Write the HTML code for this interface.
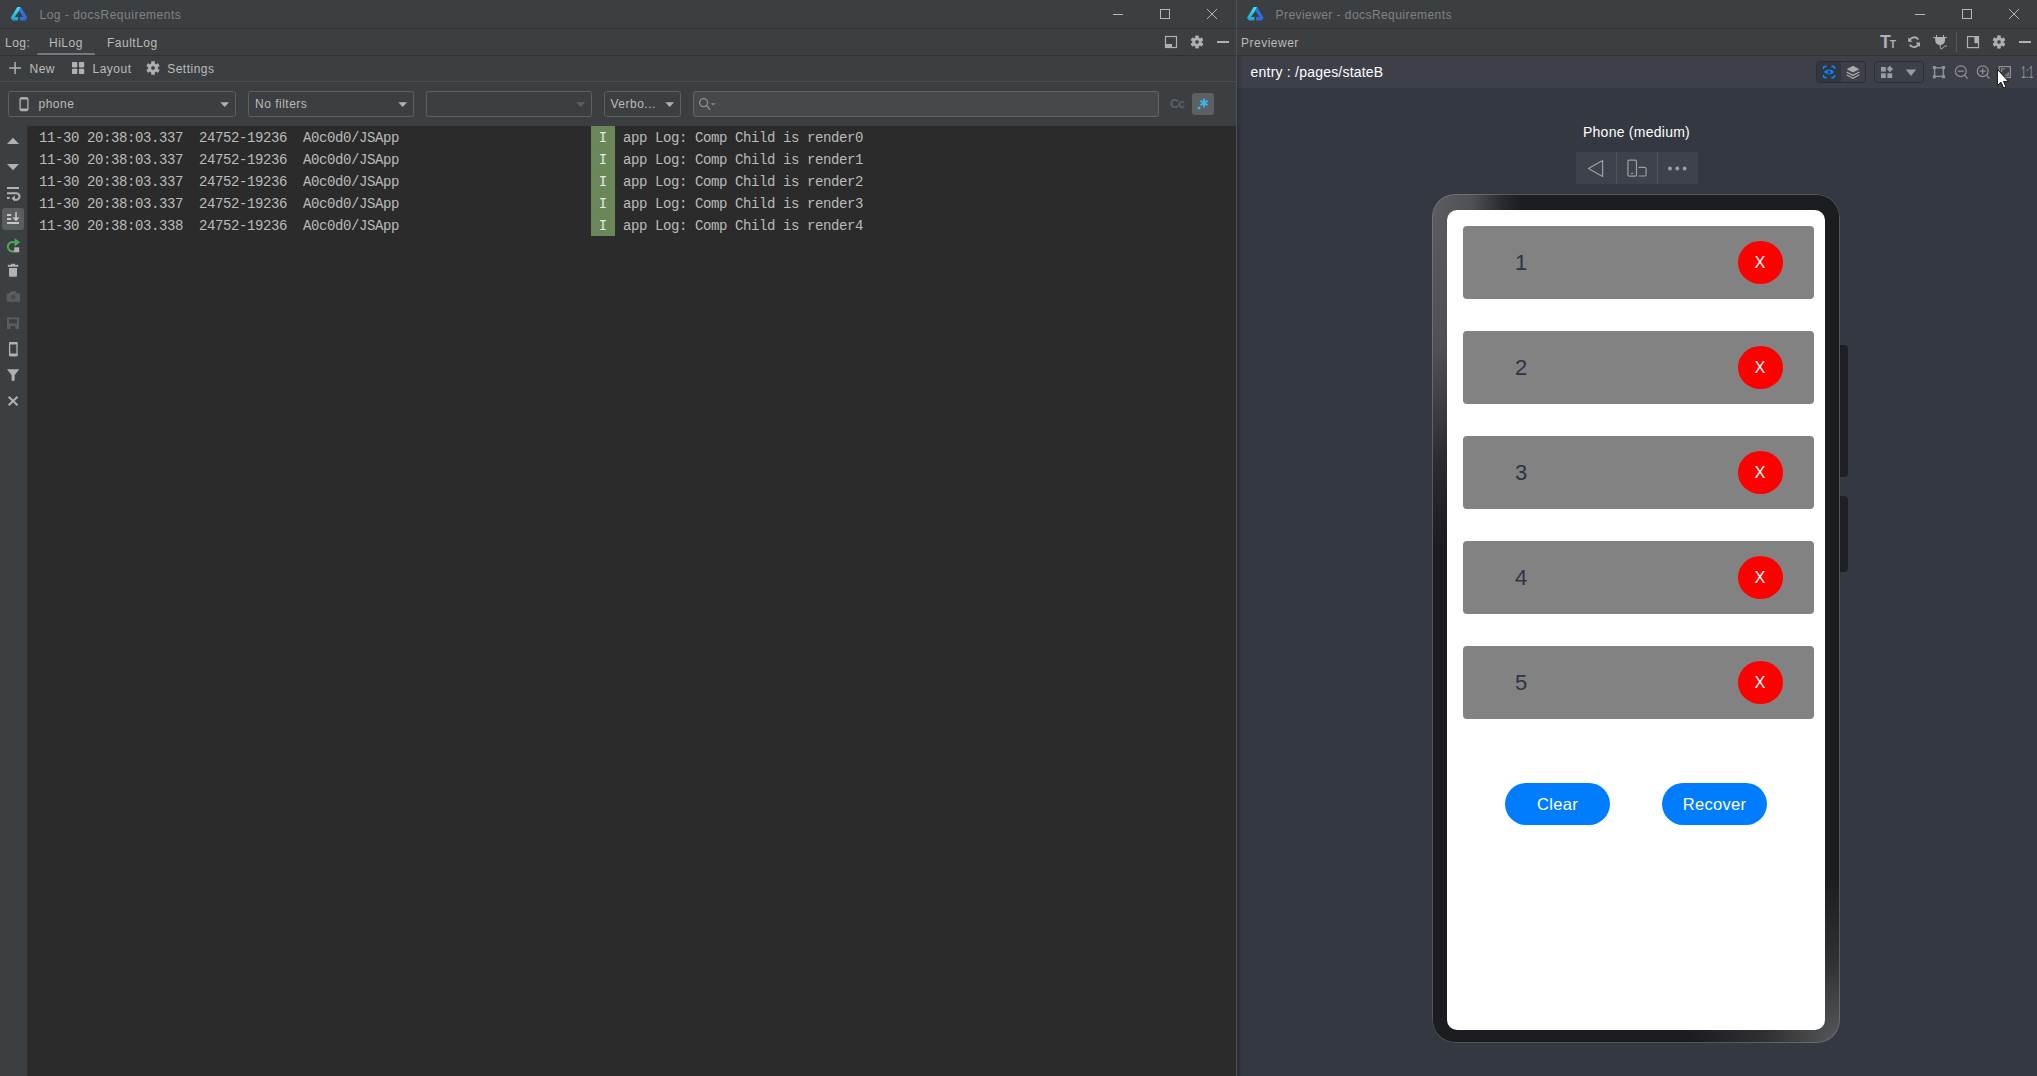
<!DOCTYPE html>
<html><head><meta charset="utf-8"><title>Log - docsRequirements</title>
<style>
*{box-sizing:border-box;margin:0;padding:0}
html,body{width:2037px;height:1076px;overflow:hidden;background:#3c3f41}
body{position:relative;font-family:"Liberation Sans",sans-serif;font-size:13px;color:#bbbbbb}
.abs{position:absolute}
.t{position:absolute;white-space:nowrap;line-height:1}
#lw{left:0;top:0;width:1237px;height:1076px;background:#3c3f41}
.hl{position:absolute;left:0;height:1px;background:#323232}
#logarea{left:28px;top:126px;width:1208px;height:950px;background:#2b2b2b}
.row{position:absolute;left:0;height:22px;width:1208px;font-family:"Liberation Mono",monospace;font-size:14px;letter-spacing:-0.4px;color:#bbbbbb;line-height:22px;white-space:pre}
.row span{position:absolute;top:0.5px}
.row .lvl{top:0;left:563px;width:24px;height:22px;background:#6a8759;color:#e8e8e8;text-align:center;line-height:25px;letter-spacing:0}
.combo{position:absolute;top:91px;height:26px;border:1px solid #5e6060;border-radius:3px;background:#3c3f41}
#rw{left:1237px;top:0;width:800px;height:1076px;background:#3c3f41}
#pv{left:0;top:56px;width:800px;height:1020px;background:#343840}
#pvbar{left:0;top:56px;width:800px;height:32px;background:#3d4048}
.item{position:absolute;left:1463px;width:351px;height:73px;background:#828282;border-radius:4px}
.num{position:absolute;left:52px;top:25.5px;font-size:22px;color:#2c3445;line-height:1}
.xb{position:absolute;left:274.5px;top:15.2px;width:45px;height:42.4px;border-radius:50%;background:#fe0000;color:#fff;font-size:16.3px;text-align:center;line-height:43px}
.btn{position:absolute;top:783px;width:105px;height:42px;border-radius:21px;background:#007dff;color:#fff;font-size:16.5px;letter-spacing:0.3px;text-align:center;line-height:42px}
#icons{position:absolute;left:0;top:0;overflow:visible}
#frame{left:1432px;top:194px;width:407.5px;height:848.5px;border-radius:23px;background-color:#1c1d20;
 background-image:radial-gradient(90px 350px at 0 0,#5b5d60 0,#4e5053 45%,rgba(50,52,55,.6) 78%,rgba(28,29,32,0) 100%),radial-gradient(150px 165px at 100% 100%,#56585a 0,rgba(60,61,63,.6) 50%,rgba(28,29,32,0) 100%);
 background-repeat:no-repeat;
 box-shadow:inset 0 0 0 1px rgba(140,142,146,.5)}
.sb{position:absolute;left:1839.5px;width:8px;background:#1e2024;border-radius:0 4px 4px 0}
</style></head><body>
<div id="lw" class="abs">
  <div class="t" style="left:39.5px;top:8.74px;font-size:12px;letter-spacing:0.5px;color:#7f8386;">Log - docsRequirements</div>
  <div class="hl" style="top:28px;width:1237px"></div>
  <div class="t" style="left:5px;top:36.94px;font-size:12px;letter-spacing:0.5px;">Log:</div>
  <div class="t" style="left:49px;top:36.94px;font-size:12px;letter-spacing:0.5px;">HiLog</div>
  <div class="abs" style="left:37px;top:53px;width:58px;height:3px;background:#747a80;border-radius:1.5px"></div>
  <div class="t" style="left:107px;top:36.94px;font-size:12px;letter-spacing:0.5px;">FaultLog</div>
  <div class="hl" style="top:55px;width:1237px"></div>
  <div class="t" style="left:29.5px;top:62.94px;font-size:12px;letter-spacing:0.5px;">New</div>
  <div class="t" style="left:92.5px;top:62.94px;font-size:12px;letter-spacing:0.5px;">Layout</div>
  <div class="t" style="left:167.2px;top:62.94px;font-size:12px;letter-spacing:0.5px;">Settings</div>
  <div class="hl" style="top:81px;width:1236px;background:#4c4f51"></div>
  <div class="combo" style="left:8px;width:228px"><div class="t" style="left:29.5px;top:6.24px;font-size:12px;letter-spacing:0.5px;">phone</div></div>
  <div class="combo" style="left:248px;width:166px"><div class="t" style="left:6px;top:6.24px;font-size:12px;letter-spacing:0.5px;">No filters</div></div>
  <div class="combo" style="left:426px;width:166px"></div>
  <div class="combo" style="left:604px;width:77px"><div class="t" style="left:5.5px;top:6.24px;font-size:12px;letter-spacing:0.5px;">Verbo...</div></div>
  <div class="combo" style="left:693px;width:466px;background:#45494a;border-color:#646869"></div>
  <div class="t" style="left:1170px;top:97.5px;color:#5e6266;font-weight:bold;font-size:12.5px;letter-spacing:-1px">Cc</div>
  <div class="abs" style="left:27px;top:126px;width:1px;height:950px;background:#323232"></div>
  <div id="logarea" class="abs">
<div class="row" style="top:0px"><span style="left:11px">11-30 20:38:03.337  24752-19236  A0c0d0/JSApp</span><span class="lvl">I</span><span style="left:595px">app Log: Comp Child is render0</span></div>
<div class="row" style="top:22px"><span style="left:11px">11-30 20:38:03.337  24752-19236  A0c0d0/JSApp</span><span class="lvl">I</span><span style="left:595px">app Log: Comp Child is render1</span></div>
<div class="row" style="top:44px"><span style="left:11px">11-30 20:38:03.337  24752-19236  A0c0d0/JSApp</span><span class="lvl">I</span><span style="left:595px">app Log: Comp Child is render2</span></div>
<div class="row" style="top:66px"><span style="left:11px">11-30 20:38:03.337  24752-19236  A0c0d0/JSApp</span><span class="lvl">I</span><span style="left:595px">app Log: Comp Child is render3</span></div>
<div class="row" style="top:88px"><span style="left:11px">11-30 20:38:03.338  24752-19236  A0c0d0/JSApp</span><span class="lvl">I</span><span style="left:595px">app Log: Comp Child is render4</span></div>
  </div>
  <div class="abs" style="left:1236px;top:0;width:1px;height:1076px;background:#4d5052"></div>
</div>
<div id="rw" class="abs">
  <div class="t" style="left:38.5px;top:8.74px;font-size:12px;letter-spacing:0.44px;color:#7f8386;">Previewer - docsRequirements</div>
  <div class="hl" style="top:28px;width:800px"></div>
  <div class="t" style="left:4px;top:36.94px;font-size:12px;letter-spacing:0.5px;">Previewer</div>
  <div class="hl" style="top:55px;width:800px"></div>
  <div id="pv" class="abs"></div>
  <div id="pvbar" class="abs"></div>
  <div class="abs" style="left:0;top:56px;width:6px;height:1020px;background:linear-gradient(90deg,rgba(20,22,40,.28),rgba(20,22,40,0))"></div>
  <div class="t" style="left:13.6px;top:65.25px;font-size:14px;letter-spacing:0.21px;color:#fff;">entry : /pages/stateB</div>
  <div class="t" style="left:346px;top:125.05px;font-size:14px;letter-spacing:0.25px;color:#fff;">Phone (medium)</div>
</div>
<div class="sb" style="top:345px;height:132px"></div>
<div class="sb" style="top:496px;height:75.5px"></div>
<div id="frame" class="abs"></div>
<div class="abs" style="left:1447px;top:209.5px;width:378px;height:820px;border-radius:10px;background:#fff"></div>
<div class="item" style="top:226px"><div class="num">1</div><div class="xb">X</div></div>
<div class="item" style="top:331px"><div class="num">2</div><div class="xb">X</div></div>
<div class="item" style="top:436px"><div class="num">3</div><div class="xb">X</div></div>
<div class="item" style="top:541px"><div class="num">4</div><div class="xb">X</div></div>
<div class="item" style="top:646px"><div class="num">5</div><div class="xb">X</div></div>
<div class="t" style="left:2020.6px;top:64.6px;font-size:16px;color:#8e9196;transform-origin:0 0;transform:scaleX(0.57)">1:1</div>
<div class="btn" style="left:1505px">Clear</div>
<div class="btn" style="left:1662px">Recover</div>
<svg id="icons" width="2037" height="1076" viewBox="0 0 2037 1076">
<defs><linearGradient id="lgA0" x1="0" y1="0" x2="0" y2="1"><stop offset="0" stop-color="#45e6ee"/><stop offset="1" stop-color="#169fe0"/></linearGradient><linearGradient id="lgB0" x1="0" y1="0" x2="1" y2="1"><stop offset="0" stop-color="#1f7ff5"/><stop offset="1" stop-color="#3b62d6"/></linearGradient></defs><g transform="translate(0,0)"><path d="M17.4,6.9 L20.8,6.9 L19,10.8 L14.7,17 L18.1,17 L18.1,20.6 L12.6,20.6 L10.7,17.8 Z" fill="url(#lgA0)"/><path d="M20.8,6.9 L27.3,17.8 L25.4,20.6 L19.9,20.6 L19.9,17 L23.3,17 L19,10.8 Z" fill="url(#lgB0)"/></g>
<defs><linearGradient id="lgA1236" x1="0" y1="0" x2="0" y2="1"><stop offset="0" stop-color="#45e6ee"/><stop offset="1" stop-color="#169fe0"/></linearGradient><linearGradient id="lgB1236" x1="0" y1="0" x2="1" y2="1"><stop offset="0" stop-color="#1f7ff5"/><stop offset="1" stop-color="#3b62d6"/></linearGradient></defs><g transform="translate(1236.3,0)"><path d="M17.4,6.9 L20.8,6.9 L19,10.8 L14.7,17 L18.1,17 L18.1,20.6 L12.6,20.6 L10.7,17.8 Z" fill="url(#lgA1236)"/><path d="M20.8,6.9 L27.3,17.8 L25.4,20.6 L19.9,20.6 L19.9,17 L23.3,17 L19,10.8 Z" fill="url(#lgB1236)"/></g>
<path d="M1113,14.5 H1123" stroke="#b4b6b8" stroke-width="1"/>
<rect x="1160.5" y="9.5" width="9" height="9" fill="none" stroke="#b4b6b8" stroke-width="1"/>
<path d="M1207,9 l10,10 M1217,9 l-10,10" stroke="#b4b6b8" stroke-width="1" fill="none"/>
<path d="M1915,14.5 H1925" stroke="#b4b6b8" stroke-width="1"/>
<rect x="1962.5" y="9.5" width="9" height="9" fill="none" stroke="#b4b6b8" stroke-width="1"/>
<path d="M2009,9 l10,10 M2019,9 l-10,10" stroke="#b4b6b8" stroke-width="1" fill="none"/>
<rect x="1165.5" y="36.5" width="11" height="11" fill="none" stroke="#afb1b3" stroke-width="1.2"/>
<rect x="1166" y="44" width="6" height="3.5" fill="#afb1b3"/>
<path d="M1195.59,35.91 L1198.41,35.91 L1198.24,37.67 L1200.13,38.76 L1201.57,37.74 L1202.98,40.17 L1201.37,40.91 L1201.37,43.09 L1202.98,43.83 L1201.57,46.26 L1200.13,45.24 L1198.24,46.33 L1198.41,48.09 L1195.59,48.09 L1195.76,46.33 L1193.87,45.24 L1192.43,46.26 L1191.02,43.83 L1192.63,43.09 L1192.63,40.91 L1191.02,40.17 L1192.43,37.74 L1193.87,38.76 L1195.76,37.67Z M1194.80,42.00 a2.20,2.20 0 1,0 4.40,0 a2.20,2.20 0 1,0 -4.40,0Z" fill="#afb1b3" fill-rule="evenodd" stroke="#afb1b3" stroke-width="0.8" stroke-linejoin="round"/>
<rect x="1217" y="41" width="12" height="2" fill="#afb1b3"/>
<path d="M9.2,68 H21 M15.1,62.1 V73.9" stroke="#afb1b3" stroke-width="1.5" fill="none"/>
<rect x="72.0" y="62.1" width="5.3" height="5.3" rx="0.8" fill="#afb1b3"/>
<rect x="78.9" y="62.1" width="5.3" height="5.3" rx="0.8" fill="#afb1b3"/>
<rect x="72.0" y="68.7" width="5.3" height="5.3" rx="0.8" fill="#afb1b3"/>
<rect x="78.9" y="68.7" width="5.3" height="5.3" rx="0.8" fill="#afb1b3"/>
<path d="M151.54,61.67 L154.46,61.67 L154.27,63.58 L156.20,64.69 L157.75,63.57 L159.22,66.10 L157.46,66.89 L157.46,69.11 L159.22,69.90 L157.75,72.43 L156.20,71.31 L154.27,72.42 L154.46,74.33 L151.54,74.33 L151.73,72.42 L149.80,71.31 L148.25,72.43 L146.78,69.90 L148.54,69.11 L148.54,66.89 L146.78,66.10 L148.25,63.57 L149.80,64.69 L151.73,63.58Z M150.70,68.00 a2.30,2.30 0 1,0 4.60,0 a2.30,2.30 0 1,0 -4.60,0Z" fill="#afb1b3" fill-rule="evenodd" stroke="#afb1b3" stroke-width="0.8" stroke-linejoin="round"/>
<rect x="20.1" y="97.9" width="7.8" height="12.6" rx="1.4" fill="none" stroke="#afb1b3" stroke-width="1.3"/>
<rect x="20" y="97.4" width="8" height="2.2" rx="1" fill="#afb1b3"/><rect x="20" y="108.6" width="8" height="2.4" rx="1" fill="#afb1b3"/>
<path d="M220.3,102.2 L229.1,102.2 L224.7,106.9 Z" fill="#afb1b3"/>
<path d="M398.3,102.2 L407.1,102.2 L402.7,106.9 Z" fill="#afb1b3"/>
<path d="M576.3,102.2 L585.1,102.2 L580.7,106.9 Z" fill="#5c5f61"/>
<path d="M665.3,102.2 L674.1,102.2 L669.7,106.9 Z" fill="#afb1b3"/>
<circle cx="703.6" cy="102.6" r="4" fill="none" stroke="#8b8e90" stroke-width="1.3"/><path d="M706.5,105.7 L710.3,109.8" stroke="#8b8e90" stroke-width="1.5"/>
<path d="M711.0,103.2 L715.4,103.2 L713.2,105.6 Z" fill="#8b8e90"/>
<rect x="1192" y="93" width="22" height="22" rx="3" fill="#5c6063"/>
<path d="M1204,98.8 V107.2 M1200.4,100.9 L1207.6,105.1 M1207.6,100.9 L1200.4,105.1" stroke="#35b7e8" stroke-width="1.9" fill="none"/>
<rect x="1197.7" y="106.8" width="2.6" height="2.6" fill="#35b7e8"/>
<path d="M7,144 L19,144 L13,137.8 Z" fill="#afb1b3"/>
<path d="M7,164 L19,164 L13,170.2 Z" fill="#afb1b3"/>
<rect x="7" y="187" width="12" height="2" fill="#afb1b3"/>
<path d="M7,193.3 H16.3 a3.2,3.2 0 0 1 0,6.4 H14" stroke="#afb1b3" stroke-width="2" fill="none"/>
<path d="M15,195.6 L11.4,198.6 L15,201.6 Z" fill="#afb1b3"/>
<rect x="7" y="197" width="2.6" height="2" fill="#afb1b3"/>
<rect x="2" y="208" width="22" height="22" rx="3" fill="#5a5d60"/>
<rect x="7" y="214" width="4.2" height="2" fill="#c3c5c7"/><rect x="7" y="218" width="4.2" height="2" fill="#c3c5c7"/><rect x="7" y="222" width="12" height="2" fill="#c3c5c7"/>
<path d="M16,212 V219" stroke="#c3c5c7" stroke-width="1.6"/><path d="M12.3,217.5 L19.7,217.5 L16,221.3 Z" fill="#c3c5c7"/>
<path d="M14.49,251.06 A4.7,4.7 0 1 1 14.85,242.73" stroke="#4fa858" stroke-width="2.1" fill="none"/>
<path d="M14.6,238 L20,242.3 L14.6,246.6 Z" fill="#4fa858"/>
<rect x="14.2" y="247.3" width="5" height="5" fill="#afb1b3"/>
<rect x="7.8" y="264.8" width="10.4" height="2" fill="#afb1b3"/><rect x="11" y="263.8" width="4" height="1.2" fill="#afb1b3"/>
<path d="M9,268 H17 V275.6 a1.2,1.2 0 0 1 -1.2,1.2 H10.2 a1.2,1.2 0 0 1 -1.2,-1.2 Z" fill="#afb1b3"/>
<path d="M6.6,294.4 a1.2,1.2 0 0 1 1.2,-1.2 H9.6 L10.8,291.2 H15.4 L16.6,293.2 H18.8 a1.2,1.2 0 0 1 1.2,1.2 V300.5 a1.2,1.2 0 0 1 -1.2,1.2 H7.8 a1.2,1.2 0 0 1 -1.2,-1.2 Z" fill="#5a5d60"/>
<circle cx="13.2" cy="297.2" r="2.4" fill="#4a4d50"/>
<path d="M7,317.4 H19 V328.9 H7 Z M9,319.2 V323.6 H17 V319.2 Z M10.6,326 V328.9 H15.4 V326 Z" fill="#5a5d60" fill-rule="evenodd"/>
<rect x="9.6" y="342.8" width="7.4" height="12.8" rx="1.2" fill="none" stroke="#afb1b3" stroke-width="1.3"/>
<rect x="9" y="342.1" width="8.6" height="2.3" rx="1" fill="#afb1b3"/><rect x="9" y="353.6" width="8.6" height="2.7" rx="1" fill="#afb1b3"/>
<path d="M7,369.2 H19.2 L14.6,375.2 V380.8 H11.6 V375.2 Z" fill="#afb1b3"/>
<path d="M8.7,396.8 L17.5,405.3 M17.5,396.8 L8.7,405.3" stroke="#afb1b3" stroke-width="2" fill="none"/>
<text x="1880.1" y="48.2" font-family="Liberation Sans, sans-serif" font-weight="bold" font-size="18px" fill="#afb1b3" textLength="10.8" lengthAdjust="spacingAndGlyphs">T</text>
<text x="1889.7" y="48.2" font-family="Liberation Sans, sans-serif" font-weight="bold" font-size="11.5px" fill="#afb1b3" textLength="6.3" lengthAdjust="spacingAndGlyphs">T</text>
<path d="M1918.4,39.6 A4.9,4.9 0 0 0 1909.6,40.6 M1909.8,44.8 A4.9,4.9 0 0 0 1918.6,43.8" stroke="#afb1b3" stroke-width="1.8" fill="none"/>
<path d="M1908.2,37.4 V41.8 H1912.6 Z" fill="#afb1b3"/><path d="M1920,47 V42.6 H1915.6 Z" fill="#afb1b3"/>
<path d="M1933.2,37 H1946.9 V38 H1945 V40.2 a4.9,4.9 0 0 1 -9.8,0 V38 H1933.2 Z" fill="#afb1b3"/>
<path d="M1936.5,34.9 V37.5 M1943.5,34.9 V37.5" stroke="#afb1b3" stroke-width="1"/>
<path d="M1940.2,44.8 V47.2 q0,1.8 1.6,1.5 q1.2,-0.3 1.7,-1.6 q0.5,-1.3 3.4,-1.1" stroke="#afb1b3" stroke-width="1" fill="none"/>
<path d="M1956.5,32 V52" stroke="#55585a" stroke-width="1"/>
<rect x="1967.5" y="36.6" width="11" height="11" fill="none" stroke="#afb1b3" stroke-width="1.2"/>
<rect x="1974.4" y="36.6" width="4.4" height="6.6" fill="#afb1b3"/>
<path d="M1997.58,35.86 L2000.42,35.86 L2000.24,37.67 L2002.13,38.76 L2003.61,37.70 L2005.02,40.16 L2003.37,40.91 L2003.37,43.09 L2005.02,43.84 L2003.61,46.30 L2002.13,45.24 L2000.24,46.33 L2000.42,48.14 L1997.58,48.14 L1997.76,46.33 L1995.87,45.24 L1994.39,46.30 L1992.98,43.84 L1994.63,43.09 L1994.63,40.91 L1992.98,40.16 L1994.39,37.70 L1995.87,38.76 L1997.76,37.67Z M1996.80,42.00 a2.20,2.20 0 1,0 4.40,0 a2.20,2.20 0 1,0 -4.40,0Z" fill="#afb1b3" fill-rule="evenodd" stroke="#afb1b3" stroke-width="0.8" stroke-linejoin="round"/>
<rect x="2019" y="41" width="12" height="2" fill="#afb1b3"/>
<rect x="1816.5" y="61.5" width="49" height="21" rx="3.2" fill="#3d4048" stroke="#2b2e34" stroke-width="1"/>
<path d="M1820.5,62 H1841 V82 H1820 a3,3 0 0 1 -3,-3 V65 a3,3 0 0 1 3,-3 Z" fill="#32363d"/>
<rect x="1874.5" y="61.5" width="49" height="21" rx="3.2" fill="#3c4047" stroke="#2b2e34" stroke-width="1"/>
<path d="M1823.5,69 V68 a1.6,1.6 0 0 1 1.6,-1.6 H1826.6 M1831.4,66.4 H1832.9 a1.6,1.6 0 0 1 1.6,1.6 V69 M1834.5,75 V76 a1.6,1.6 0 0 1 -1.6,1.6 H1831.4 M1826.6,77.6 H1825.1 a1.6,1.6 0 0 1 -1.6,-1.6 V75" stroke="#0a84ff" stroke-width="1.6" fill="none"/>
<path d="M1823.8,72 Q1829,67.2 1834.2,72 Q1829,76.8 1823.8,72 Z" fill="#0a84ff"/><circle cx="1829" cy="72" r="1.5" fill="#32363d"/>
<path d="M1853,65.8 L1859.4,69.2 L1853,72.6 L1846.6,69.2 Z" fill="#a6a8aa"/>
<path d="M1846.6,72 L1853,75.4 L1859.4,72 M1846.6,74.8 L1853,78.2 L1859.4,74.8" stroke="#a6a8aa" stroke-width="1.3" fill="none"/>
<rect x="1881" y="67" width="4.8" height="4.6" fill="#9a9c9f"/><rect x="1881" y="73.3" width="4.8" height="4.7" fill="#9a9c9f"/><rect x="1887.4" y="73.3" width="4.8" height="4.7" fill="#9a9c9f"/>
<path d="M1889.9,65.8 L1893,69 L1889.9,72.2 L1886.8,69 Z" fill="#9a9c9f"/>
<path d="M1905.8,69.4 L1916.2,69.4 L1911.0,75.9 Z" fill="#9a9c9f"/>
<rect x="1934.6" y="67.8" width="8.8" height="8.6" fill="none" stroke="#8e9196" stroke-width="1.4"/>
<rect x="1932.8" y="66.0" width="3.1" height="3.1" fill="#8e9196"/>
<rect x="1942.0" y="66.0" width="3.1" height="3.1" fill="#8e9196"/>
<rect x="1932.8" y="75.2" width="3.1" height="3.1" fill="#8e9196"/>
<rect x="1942.0" y="75.2" width="3.1" height="3.1" fill="#8e9196"/>
<circle cx="1960.8" cy="71.2" r="5.4" fill="none" stroke="#8e9196" stroke-width="1.2"/><path d="M1964.8,75.3 L1967.6,78.6" stroke="#8e9196" stroke-width="1.3"/><path d="M1957.8,71.2 H1963.8" stroke="#8e9196" stroke-width="1.2"/>
<circle cx="1982.7" cy="71.2" r="5.4" fill="none" stroke="#8e9196" stroke-width="1.2"/><path d="M1986.7,75.3 L1989.5,78.6" stroke="#8e9196" stroke-width="1.3"/><path d="M1979.7,71.2 H1985.7 M1982.7,68.2 V74.2" stroke="#8e9196" stroke-width="1.2"/>
<rect x="1999.2" y="66.6" width="11.2" height="10.8" fill="none" stroke="#8e9196" stroke-width="1.2"/>
<path d="M2001.6,72 V69 H2004.6 M2005.2,75.2 H2008.2 V72.2" stroke="#8e9196" stroke-width="1.2" fill="none"/>
<path d="M1997.4,69.4 V85.6 L2001,82.2 L2003.6,88 L2006,87 L2003.5,81.4 H2008.6 Z" fill="#fff" stroke="#111" stroke-width="1" stroke-linejoin="round"/>
<rect x="1576" y="152" width="122" height="32" fill="#3e424a"/>
<path d="M1616.5,152 V184 M1657.5,152 V184" stroke="#50545b" stroke-width="1"/>
<path d="M1588.4,168.5 L1602.6,160.6 V176.4 Z" fill="none" stroke="#9c9fa4" stroke-width="1.2" stroke-linejoin="round"/>
<rect x="1627.9" y="160.1" width="8.6" height="16" rx="1.6" fill="none" stroke="#9c9fa4" stroke-width="1.2"/><path d="M1630.8,173.4 H1633.4" stroke="#9c9fa4" stroke-width="1"/>
<path d="M1638.5,167.4 H1644.6 a1.5,1.5 0 0 1 1.5,1.5 V174.5 a1.5,1.5 0 0 1 -1.5,1.5 H1638.5" fill="none" stroke="#9c9fa4" stroke-width="1.2"/>
<circle cx="1670.0" cy="168.5" r="1.9" fill="#9c9fa4"/>
<circle cx="1677.3" cy="168.5" r="1.9" fill="#9c9fa4"/>
<circle cx="1684.6" cy="168.5" r="1.9" fill="#9c9fa4"/>
</svg>
</body></html>
